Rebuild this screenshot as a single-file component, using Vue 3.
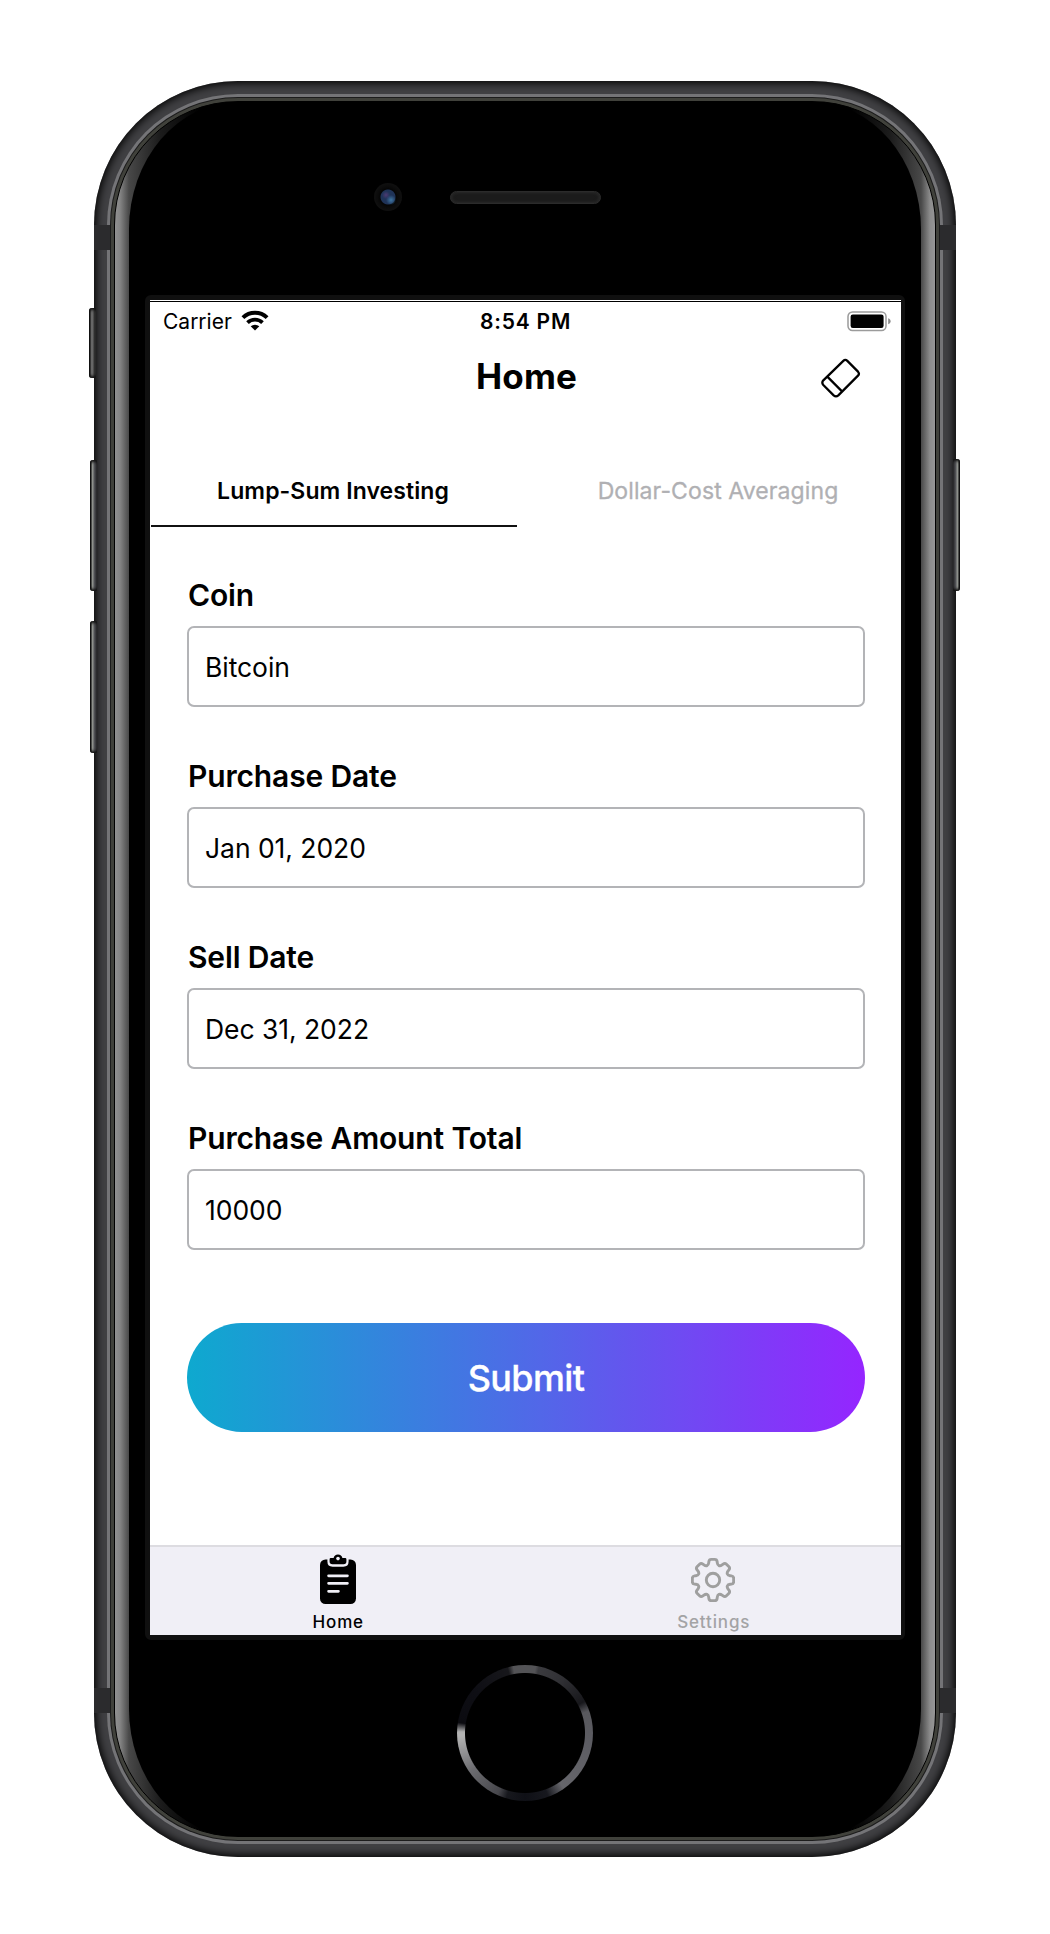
<script setup>
import { ref } from 'vue'

const tabs = [
  { id: 'lump', label: 'Lump-Sum Investing' },
  { id: 'dca', label: 'Dollar-Cost Averaging' },
]
const activeTab = ref('lump')

const fields = ref([
  { label: 'Coin', value: 'Bitcoin' },
  { label: 'Purchase Date', value: 'Jan 01, 2020' },
  { label: 'Sell Date', value: 'Dec 31, 2022' },
  { label: 'Purchase Amount Total', value: '10000' },
])

// Eight-tooth gear outline with softened corners.
function gearPath(cx, cy, outer, inner, teeth) {
  const pts = []
  const rad = Math.PI / 180
  for (let i = 0; i < teeth; i++) {
    const a = (360 / teeth) * i - 90
    for (const [da, r] of [[-17, inner], [-10.5, outer], [10.5, outer], [17, inner]]) {
      pts.push([cx + r * Math.cos((a + da) * rad), cy + r * Math.sin((a + da) * rad)])
    }
  }
  const n = pts.length
  const toward = (p, q, d) => {
    const len = Math.hypot(q[0] - p[0], q[1] - p[1])
    const t = Math.min(d / len, 0.5)
    return [p[0] + (q[0] - p[0]) * t, p[1] + (q[1] - p[1]) * t]
  }
  const f = (p) => p.map((v) => v.toFixed(2)).join(' ')
  return (
    pts
      .map((p, i) => {
        const a = toward(p, pts[(i + n - 1) % n], 2.2)
        const b = toward(p, pts[(i + 1) % n], 2.2)
        return `${i ? 'L' : 'M'}${f(a)}Q${f(p)} ${f(b)}`
      })
      .join('') + 'Z'
  )
}
const gear = gearPath(22, 22, 21, 15.6, 8)
</script>

<template>
  <main class="stage">
    <div class="phone">
      <i class="key key-mute"></i>
      <i class="key key-up"></i>
      <i class="key key-down"></i>
      <i class="key key-power"></i>
      <i class="band band-top"></i>
      <i class="band band-bottom"></i>

      <div class="chamfer">
        <div class="groove">
          <div class="rim">
            <div class="glass">
              <div class="face">
                <div class="forehead">
                  <span class="camera"></span>
                  <span class="speaker"></span>
                </div>

                <div class="screen">
                  <div class="status">
                    <div class="carrier">
                      <span>Carrier</span>
                      <svg width="28" height="21" viewBox="0 0 28 21">
                        <path d="M1.9 7.6a17.4 17.4 0 0 1 24.2 0" fill="none" stroke="#000" stroke-width="4" />
                        <path d="M6.5 12.6a10.9 10.9 0 0 1 15 0" fill="none" stroke="#000" stroke-width="3.8" />
                        <path d="M9.7 16.3a6.4 6.4 0 0 1 8.6 0L14 20.6z" />
                      </svg>
                    </div>
                    <div class="clock">8:54 PM</div>
                    <svg class="battery" width="45" height="21" viewBox="0 0 45 21">
                      <rect x="1" y="1" width="38" height="18.5" rx="4.5" fill="none" stroke="#9b9b9b" stroke-width="1.5" />
                      <rect x="3.6" y="3.6" width="33" height="13.4" rx="2.2" />
                      <path d="M41.2 7.2c1.6.6 2.4 1.6 2.4 3s-.8 2.4-2.4 3z" fill="#8a8a8a" />
                    </svg>
                  </div>

                  <header class="header">
                    <h1>Home</h1>
                    <svg class="eraser" width="41" height="41" viewBox="0 0 123 123">
                      <g fill="none" stroke="#000" stroke-width="6.8" stroke-linejoin="round">
                        <path d="M70 8.5Q76 2.5 82 8.5L114 41Q119.5 47 114 53L55 112Q48 118.5 41 112L10 81Q4 74 10 67Z" />
                        <path d="M22 56 66 100" />
                      </g>
                    </svg>
                  </header>

                  <nav class="tabs">
                    <button
                      v-for="t in tabs"
                      :key="t.id"
                      :class="['tab', t.id, { active: t.id === activeTab }]"
                      @click="activeTab = t.id"
                    >
                      {{ t.label }}
                    </button>
                  </nav>

                  <section class="form">
                    <div v-for="f in fields" :key="f.label" class="field">
                      <div class="label">{{ f.label }}</div>
                      <div class="input">{{ f.value }}</div>
                    </div>
                    <button class="submit">Submit</button>
                  </section>

                  <footer class="tabbar">
                    <div class="item current">
                      <svg width="36" height="52" viewBox="0 0 36 52">
                        <rect x="0" y="6.5" width="36" height="44.5" rx="5.5" />
                        <path
                          d="M9.6 0V8.5Q9.6 11.5 12.6 11.5H23.4Q26.4 11.5 26.4 8.5V0Z"
                          fill="#f0eff6"
                          stroke="#f0eff6"
                          stroke-width="4.4"
                        />
                        <path d="M9.6 6.2Q9.6 5 10.8 5H13.6A4.5 4.5 0 0 1 22.4 5H25.2Q26.4 5 26.4 6.2V8.5Q26.4 11.3 23.6 11.3H12.4Q9.6 11.3 9.6 8.5Z" />
                        <circle cx="18" cy="5.6" r="1.8" fill="#f0eff6" />
                        <path d="M8.6 22.8H27.4M8.6 30.3H27.4M8.6 38.3H18.4" stroke="#f0eff6" stroke-width="2.8" stroke-linecap="round" />
                      </svg>
                      <span>Home</span>
                    </div>
                    <div class="item">
                      <svg width="44" height="52" viewBox="0 -5 44 52">
                        <g fill="none" stroke="#9f9f9f" stroke-width="2.9">
                          <path :d="gear" />
                          <circle cx="22" cy="22" r="6.7" />
                        </g>
                      </svg>
                      <span>Settings</span>
                    </div>
                  </footer>
                </div>

                <div class="home-key"></div>
              </div>
            </div>
          </div>
        </div>
      </div>
    </div>
  </main>
</template>

<style>
body {
  background: #fff;
}
</style>

<style scoped>
* {
  box-sizing: border-box;
}
.stage {
  width: 1050px;
  height: 1934px;
  padding: 81px 94px 0;
  background: #fff;
  font-family: Inter, 'Liberation Sans', sans-serif;
  color: #000;
}
button {
  border: 0;
  margin: 0;
  padding: 0;
  background: none;
  font-family: inherit;
}

/* device shell */
.phone {
  position: relative;
  width: 862px;
  height: 1776px;
  padding: 13px;
  border-radius: 144px;
  background: #404043;
  box-shadow: inset 0 0 9px 2px #000;
}
.chamfer {
  height: 100%;
  padding: 3px;
  border-radius: 131px;
  background: #747477;
}
.groove {
  height: 100%;
  padding: 1px;
  border-radius: 128px;
  background: #1c1c1c;
}
.rim {
  height: 100%;
  padding: 3px;
  border-radius: 127px;
  background: #40413b;
}
.glass {
  height: 100%;
  padding: 0 14px;
  border-radius: 124px;
  border: 1px solid #000;
  background: linear-gradient(
    to right,
    #919191 0,
    #858585 5px,
    #484848 14px,
    #1c1c1c 45px,
    #000 85px,
    #000 calc(100% - 85px),
    #1c1c1c calc(100% - 45px),
    #484848 calc(100% - 14px),
    #8c8c8c calc(100% - 5px),
    #969696 100%
  );
}
.face {
  height: 100%;
  border-radius: 109px / 127px;
  background: #000;
  display: flex;
  flex-direction: column;
  align-items: center;
}
.key {
  position: absolute;
  width: 7px;
  border-radius: 3px 1px 1px 3px;
  background: linear-gradient(to right, #111 0 1px, #8d908b 2px 3px, #55565a 4px, #303032 7px);
  box-shadow: inset 0 3px 3px -1px #111, inset 0 -3px 3px -1px #111;
}
.key-mute {
  left: -5px;
  top: 227px;
  height: 70px;
  background: linear-gradient(to right, #111 0 1px, #666 2px 4px, #333 5px 7px);
}
.key-up {
  left: -4px;
  top: 379px;
  height: 131px;
}
.key-down {
  left: -4px;
  top: 540px;
  height: 132px;
}
.key-power {
  right: -4px;
  top: 378px;
  height: 132px;
  transform: scaleX(-1);
}
.band {
  position: absolute;
  left: 0;
  right: 0;
  height: 25px;
  border: solid #2b2b2d;
  border-width: 0 16px;
}
.band-top {
  top: 144px;
}
.band-bottom {
  top: 1607px;
}

.forehead {
  width: 100%;
  height: 193px;
  padding-bottom: 3px;
  display: grid;
  grid-template-columns: 1fr 151px 1fr;
  align-items: center;
}
.camera {
  justify-self: end;
  margin-right: 48px;
  width: 28px;
  height: 28px;
  border-radius: 50%;
  background:
    radial-gradient(circle at 12px 12px, #4c3a72 0, transparent 4px),
    radial-gradient(circle at 17px 17px, #3f76a3 0, transparent 5px),
    radial-gradient(circle at 14px 14px, #1f3358 0 7px, #050505 8px, #0a0a0a 10px, #101010 14px);
}
.speaker {
  grid-column: 2;
  height: 13px;
  border-radius: 7px;
  border: 1px solid #2b2b2b;
  background: #1b1b1b;
  box-shadow: inset 0 0 3px 1px #2a2a2a;
}
.home-key {
  width: 136px;
  height: 136px;
  margin-top: 25px;
  border-radius: 50%;
  background:
    radial-gradient(circle, #000 59.5px, transparent 60.5px),
    conic-gradient(
      #535356 0deg 9deg,
      #3b3b3f 12deg,
      #303034 35deg,
      #17171b 62deg,
      #58585d 71deg,
      #5d5d63 100deg,
      #66666b 145deg,
      #17181e 160deg,
      #0f1016 180deg,
      #17181d 196deg,
      #47474c 204deg,
      #6c6c70 235deg,
      #b4b4b4 268deg,
      #b0b0b0 271deg,
      #0b0b10 279deg,
      #0e0e14 310deg,
      #17171b 345deg,
      #535356 350deg
    );
}

/* app */
.screen {
  width: 760px;
  height: 1345px;
  flex: none;
  border: 5px solid #101010;
  border-right-width: 4px;
  border-radius: 6px;
  background: #fff;
  display: flex;
  flex-direction: column;
}
.status {
  height: 42px;
  padding: 0 9px 0 13px;
  display: grid;
  grid-template-columns: 1fr auto 1fr;
  align-items: center;
  font-size: 21px;
  line-height: 42px;
  background: linear-gradient(#fff 1px, #000 1px 2px, #fff 2px);
}
.carrier {
  display: flex;
  align-items: center;
  gap: 9px;
  padding-top: 1px;
}
.carrier svg {
  margin-top: -3px;
}
.clock {
  padding: 1px 4px 0 0;
  font-weight: 600;
  letter-spacing: 0.8px;
}
.battery {
  justify-self: end;
  margin-top: -1px;
}
.header {
  height: 69px;
  display: grid;
  grid-template-columns: 1fr auto 1fr;
  align-items: center;
}
h1 {
  grid-column: 2;
  margin: -2px 0 0 2px;
  font-size: 35px;
  line-height: 42px;
  font-weight: 700;
  letter-spacing: 0.2px;
}
.eraser {
  justify-self: end;
  margin: 4px 40px 0 0;
}
.tabs {
  margin-top: 43px;
  height: 73px;
  display: flex;
  justify-content: space-between;
  padding-left: 1px;
}
.tab {
  width: 366px;
  height: 73px;
  padding-top: 2px;
  border-bottom: 2px solid transparent;
  font-size: 23px;
  font-weight: 500;
  color: #b0b0b3;
  letter-spacing: -0.05px;
  white-space: nowrap;
}
.tab.dca {
  font-weight: 400;
  letter-spacing: 0.1px;
  -webkit-text-stroke: 0.3px #b0b0b3;
}
.tab.active {
  padding-right: 2px;
  font-weight: 600;
  color: #000;
  border-bottom-color: #111;
  letter-spacing: 0.08px;
}
.form {
  padding: 50px 36px 0 37px;
  display: flex;
  flex-direction: column;
}
.field + .field {
  margin-top: 51px;
}
.field {
  height: 130px;
  display: flex;
  flex-direction: column;
  gap: 13px;
}
.label {
  padding-left: 1px;
  font-size: 30px;
  line-height: 36px;
  font-weight: 600;
  letter-spacing: -0.15px;
}
.input {
  height: 81px;
  padding: 1px 0 0 16px;
  border: 2px solid #b3b4b7;
  border-radius: 7px;
  font-size: 26.5px;
  line-height: 77px;
  letter-spacing: -0.05px;
}
.submit {
  margin-top: 73px;
  height: 109px;
  border-radius: 55px;
  background: linear-gradient(to right, #0ea9cf, #4f6ae7 50%, #9525ff);
  color: #fff;
  font-size: 36px;
  font-weight: 500;
  letter-spacing: -0.65px;
  -webkit-text-stroke: 0.3px #fff;
}
.tabbar {
  margin-top: auto;
  height: 90px;
  border-top: 2px solid #dddce1;
  background: #f0eff6;
  display: grid;
  grid-template-columns: 1fr 1fr;
}
.item {
  display: flex;
  flex-direction: column;
  align-items: center;
  padding-top: 6px;
  font-size: 17px;
  line-height: 20px;
  font-weight: 500;
  letter-spacing: 0.85px;
  color: #a3a3a5;
}
.item span {
  margin-top: 7px;
  padding-left: 1px;
}
.item.current {
  color: #000;
}
</style>
